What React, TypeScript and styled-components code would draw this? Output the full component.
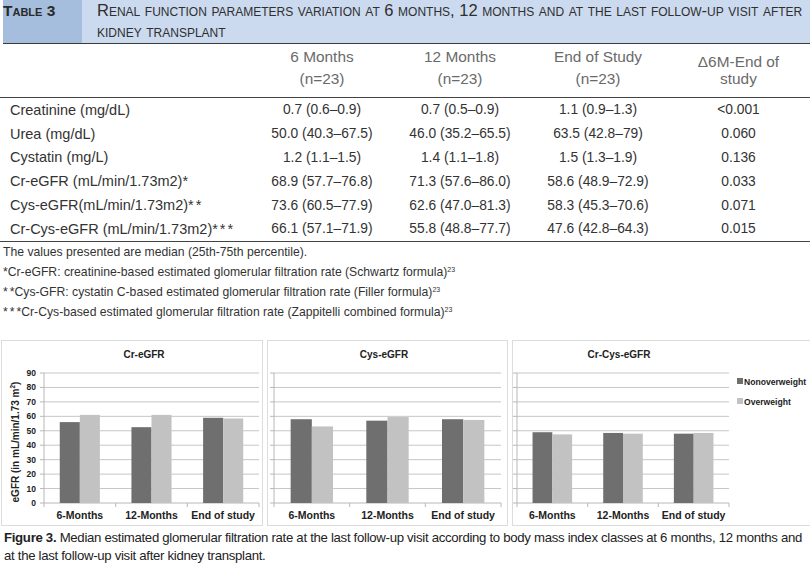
import React from 'react';
import styled, { createGlobalStyle } from 'styled-components';

const GlobalStyle = createGlobalStyle`
  html, body { margin: 0; padding: 0; background: #fff; }
  body { font-family: "Liberation Sans", Arial, sans-serif; color: #333; }
`;

const Page = styled.div`
  width: 810px;
  height: 568px;
  overflow: hidden;
`;

const TitleBar = styled.div`
  display: flex;
  height: 43px;
  margin-left: 3px;
  border-bottom: 1.5px solid #3b3b3b;
`;

const TableLabel = styled.div`
  width: 79px;
  background: #a5bedd;
  font-weight: bold;
  font-variant: small-caps;
  font-size: 15.5px;
  line-height: 21px;
  color: #2a2a2a;
`;

const TableTitle = styled.div`
  flex: 1;
  background: #cbdaee;
  padding: 0 0 0 15px;
  font-variant: small-caps;
  font-size: 16.5px;
  line-height: 21px;
  color: #2f2f2f;
  white-space: nowrap;
`;

const Grid = styled.div`
  display: grid;
  grid-template-columns: 253px 138px 138px 138px 1fr;
`;

const HeadRow = styled(Grid)`
  height: 53px;
  border-bottom: 1.5px solid #444;
  color: #6a6a6a;
  font-size: 15.4px;
`;

const HeadCell = styled.div<{ $tight?: boolean }>`
  text-align: center;
  padding-top: ${(p) => (p.$tight ? '9px' : '2px')};
  line-height: ${(p) => (p.$tight ? '17px' : '22px')};
`;

const Body = styled.div`
  border-bottom: 1px solid #444;
`;

const BodyRow = styled(Grid)`
  height: 23.8px;
  align-items: center;
  font-size: 13.8px;
  color: #333;
`;

const LabelCell = styled.div`
  padding-left: 10px;
  white-space: nowrap;
  font-size: 14.5px;
`;

const ValueCell = styled.div`
  text-align: center;
  white-space: nowrap;
`;

const Stars = styled.span`
  letter-spacing: 2px;
`;

const Notes = styled.div`
  padding-left: 3px;
  font-size: 12.2px;
  color: #333;
`;

const Note = styled.div`
  line-height: 20px;
  white-space: nowrap;
`;

const Sup = styled.sup`
  font-size: 7px;
  vertical-align: 4px;
  line-height: 0;
`;

const Charts = styled.div`
  display: flex;
  gap: 4px;
  margin-top: 18px;
  height: 186px;
  padding-left: 1px;
`;

const Panel = styled.div<{ $w: number }>`
  width: ${(p) => p.$w}px;
  height: 186px;
  box-sizing: border-box;
  border: 1px solid #dcdcdc;
  flex: none;
`;

const Caption = styled.div`
  margin-top: 3px;
  padding-left: 4px;
  font-family: "Liberation Sans", Arial, sans-serif;
  font-size: 13.2px;
  letter-spacing: -0.3px;
  line-height: 18px;
  color: #222;
  white-space: nowrap;
`;

const Bold = styled.b`
  font-weight: bold;
`;

type Row = [React.ReactNode, string, string, string, string];
const rows: Row[] = [
  ['Creatinine (mg/dL)', '0.7 (0.6–0.9)', '0.7 (0.5–0.9)', '1.1 (0.9–1.3)', '<0.001'],
  ['Urea (mg/dL)', '50.0 (40.3–67.5)', '46.0 (35.2–65.5)', '63.5 (42.8–79)', '0.060'],
  ['Cystatin (mg/L)', '1.2 (1.1–1.5)', '1.4 (1.1–1.8)', '1.5 (1.3–1.9)', '0.136'],
  [<>Cr-eGFR (mL/min/1.73m2)*</>, '68.9 (57.7–76.8)', '71.3 (57.6–86.0)', '58.6 (48.9–72.9)', '0.033'],
  [<>Cys-eGFR(mL/min/1.73m2)<Stars>*</Stars>*</>, '73.6 (60.5–77.9)', '62.6 (47.0–81.3)', '58.3 (45.3–70.6)', '0.071'],
  [<>Cr-Cys-eGFR (mL/min/1.73m2)<Stars>**</Stars>*</>, '66.1 (57.1–71.9)', '55.8 (48.8–77.7)', '47.6 (42.8–64.3)', '0.015'],
];

type ChartProps = {
  title: string;
  width: number;
  axisX: number;
  plotRight: number;
  titleX: number;
  data: [number, number][];
  yAxis?: boolean;
  legend?: boolean;
};

const TOP = 32;
const ZERO = 162;
const cats = ['6-Months', '12-Months', 'End of study'];
const FONT = 'Liberation Sans, Arial, sans-serif';

function Chart({ title, width, axisX, plotRight, titleX, data, yAxis, legend }: ChartProps) {
  const unit = (ZERO - TOP) / 90;
  const catW = (plotRight - axisX) / 3;
  const barW = catW * 0.28;
  const ticks = [0, 10, 20, 30, 40, 50, 60, 70, 80, 90];
  return (
    <svg width={width - 2} height={184} style={{ display: 'block' }}>
      <text x={titleX} y={17} textAnchor="middle" fontFamily={FONT} fontWeight="bold" fontSize="10" fill="#222">
        {title}
      </text>
      {ticks.map((t) => {
        const y = ZERO - t * unit;
        return (
          <g key={t}>
            {t > 0 && <line x1={axisX} x2={plotRight} y1={y} y2={y} stroke="#c6c6c6" strokeWidth="1" />}
            <line x1={axisX - 4} x2={axisX} y1={y} y2={y} stroke="#b8b8b8" strokeWidth="1" />
            {yAxis && (
              <text x={axisX - 8} y={y + 3} textAnchor="end" fontFamily={FONT} fontWeight="bold" fontSize="8.5" fill="#222">
                {t}
              </text>
            )}
          </g>
        );
      })}
      <line x1={axisX} x2={axisX} y1={TOP} y2={ZERO} stroke="#b8b8b8" strokeWidth="1" />
      <line x1={axisX} x2={plotRight} y1={ZERO} y2={ZERO} stroke="#b8b8b8" strokeWidth="1" />
      {[0, 1, 2, 3].map((i) => (
        <line key={i} x1={axisX + i * catW} x2={axisX + i * catW} y1={ZERO} y2={ZERO + 4} stroke="#b8b8b8" strokeWidth="1" />
      ))}
      {data.map(([a, b], i) => {
        const cx = axisX + catW * (i + 0.5);
        return (
          <g key={i}>
            <rect x={cx - barW} y={ZERO - a * unit} width={barW} height={a * unit} fill="#6f6f6f" />
            <rect x={cx} y={ZERO - b * unit} width={barW} height={b * unit} fill="#c2c2c2" />
            <text x={cx} y={178} textAnchor="middle" fontFamily={FONT} fontWeight="bold" fontSize="10.5" fill="#222">
              {cats[i]}
            </text>
          </g>
        );
      })}
      {yAxis && (
        <text
          transform={`translate(17 ${(TOP + ZERO) / 2 + 4}) rotate(-90)`}
          textAnchor="middle"
          fontFamily={FONT}
          fontWeight="bold"
          fontSize="10"
          fill="#222"
        >
          eGFR (in mL/min/1.73 m<tspan fontSize="6.5" dy="-4">2</tspan>
          <tspan dy="4">)</tspan>
        </text>
      )}
      {legend && (
        <g fontFamily={FONT} fontWeight="bold" fontSize="8.6" fill="#222">
          <rect x={224} y={37} width={6} height={6} fill="#6f6f6f" />
          <text x={231} y={43.5}>Nonoverweight</text>
          <rect x={224} y={57} width={6} height={6} fill="#c2c2c2" />
          <text x={231} y={63.5}>Overweight</text>
        </g>
      )}
    </svg>
  );
}

export default function App() {
  return (
    <Page>
      <GlobalStyle />
      <TitleBar>
        <TableLabel>Table 3</TableLabel>
        <TableTitle>
          Renal function parameters variation at 6 months, 12 months and at the last follow-up visit after
          <br />
          kidney transplant
        </TableTitle>
      </TitleBar>
      <HeadRow>
        <HeadCell />
        <HeadCell>
          6 Months
          <br />
          (n=23)
        </HeadCell>
        <HeadCell>
          12 Months
          <br />
          (n=23)
        </HeadCell>
        <HeadCell>
          End of Study
          <br />
          (n=23)
        </HeadCell>
        <HeadCell $tight>
          Δ6M-End of
          <br />
          study
        </HeadCell>
      </HeadRow>
      <Body>
        {rows.map((r, i) => (
          <BodyRow key={i}>
            <LabelCell>{r[0]}</LabelCell>
            <ValueCell>{r[1]}</ValueCell>
            <ValueCell>{r[2]}</ValueCell>
            <ValueCell>{r[3]}</ValueCell>
            <ValueCell>{r[4]}</ValueCell>
          </BodyRow>
        ))}
      </Body>
      <Notes>
        <Note>The values presented are median (25th-75th percentile).</Note>
        <Note>
          *Cr-eGFR: creatinine-based estimated glomerular filtration rate (Schwartz formula)<Sup>23</Sup>
        </Note>
        <Note>
          <Stars>*</Stars>*Cys-GFR: cystatin C-based estimated glomerular filtration rate (Filler formula)<Sup>23</Sup>
        </Note>
        <Note>
          <Stars>**</Stars>*Cr-Cys-based estimated glomerular filtration rate (Zappitelli combined formula)<Sup>23</Sup>
        </Note>
      </Notes>
      <Charts>
        <Panel $w={262}>
          <Chart
            title="Cr-eGFR"
            width={262}
            axisX={42}
            plotRight={257}
            titleX={142}
            yAxis
            data={[
              [56, 61],
              [52.5, 61],
              [59, 58.5],
            ]}
          />
        </Panel>
        <Panel $w={241}>
          <Chart
            title="Cys-eGFR"
            width={241}
            axisX={6}
            plotRight={233}
            titleX={116}
            data={[
              [58, 53],
              [57, 59.5],
              [58, 57.5],
            ]}
          />
        </Panel>
        <Panel $w={299}>
          <Chart
            title="Cr-Cys-eGFR"
            width={299}
            axisX={4}
            plotRight={216}
            titleX={106}
            legend
            data={[
              [49, 47.5],
              [48.5, 48],
              [48, 48.5],
            ]}
          />
        </Panel>
      </Charts>
      <Caption>
        <Bold>Figure 3.</Bold> Median estimated glomerular filtration rate at the last follow-up visit according to body mass index classes at 6 months, 12 months and
        <br />
        at the last follow-up visit after kidney transplant.
      </Caption>
    </Page>
  );
}
